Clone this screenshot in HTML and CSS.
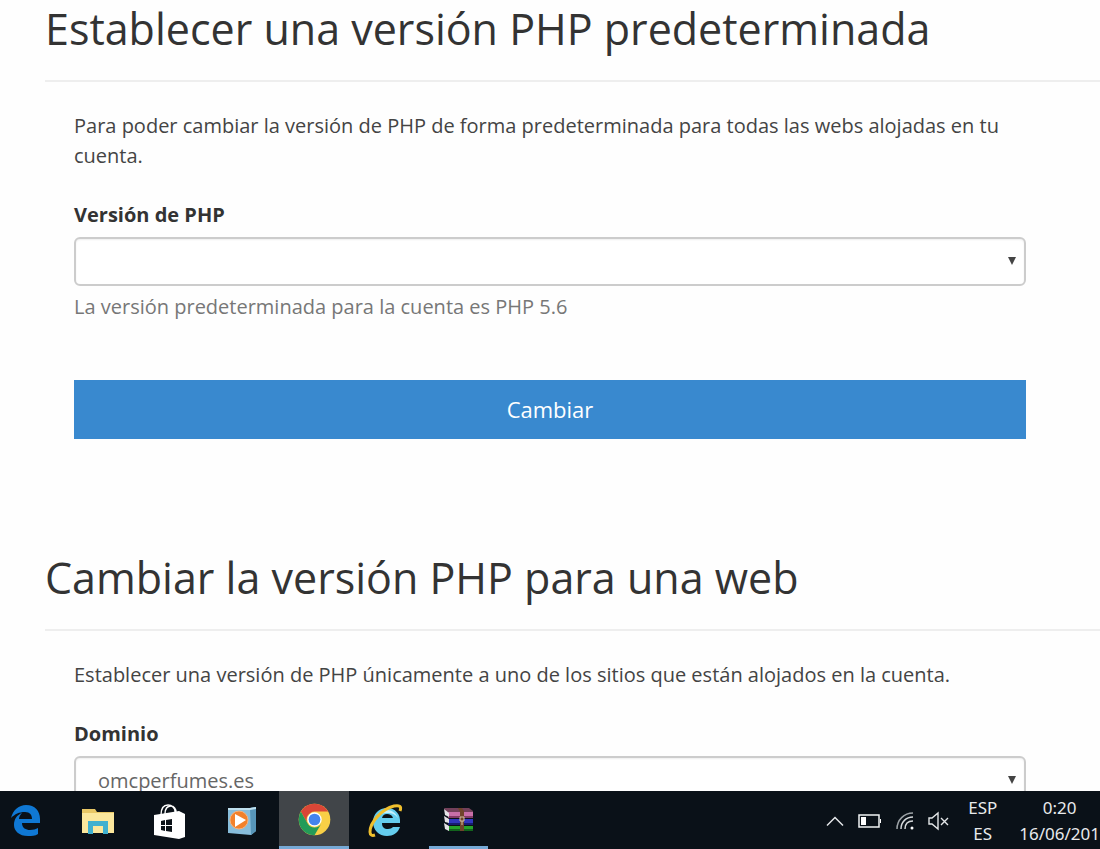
FILE: index.html
```html
<!DOCTYPE html>
<html lang="es">
<head>
  <meta charset="UTF-8">
  <meta name="viewport" content="width=device-width, initial-scale=1.0">
  <title>Versión de PHP</title>
  <link rel="stylesheet" href="styles.css">
</head>
<body>

<main class="page">
  <section class="panel">
    <h2>Establecer una versión PHP predeterminada</h2>
    <form class="panel-body">
      <p>Para poder cambiar la versión de PHP de forma predeterminada para todas las webs alojadas en tu cuenta.</p>
      <label for="version">Versión de PHP</label>
      <div class="select-box">
        <select id="version" name="version">
          <option selected></option>
        </select>
      </div>
      <span class="help">La versión predeterminada para la cuenta es PHP 5.6</span>
      <button type="button" class="btn">Cambiar</button>
    </form>
  </section>

  <section class="panel">
    <h2>Cambiar la versión PHP para una web</h2>
    <form class="panel-body">
      <p>Establecer una versión de PHP únicamente a uno de los sitios que están alojados en la cuenta.</p>
      <label for="domain">Dominio</label>
      <div class="select-box">
        <select id="domain" name="domain">
          <option selected>omcperfumes.es</option>
        </select>
      </div>
    </form>
  </section>
</main>

<footer class="taskbar">
  <nav class="apps">
    <button type="button" class="app edge" aria-label="Edge">
      <svg width="32" height="36" viewBox="0 0 32 36">
        <path fill="#0f78d4" d="M1 15C3 7 9 2 16 2c9 0 14 6 14 14v4H12c0 5 4 7 8 7 3 0 6-1 8-2v6c-3 2-6 2-10 2C9 33 4 28 4 22c0-6 3-10 8-12-2 2-3 4-3 6h13c0-4-2-7-7-7-6 0-10 2-14 6z"/>
      </svg>
    </button>
    <button type="button" class="app" aria-label="Explorador">
      <svg width="32" height="28" viewBox="0 0 32 28">
        <path fill="#e8c765" d="M0 2h13l2 3h17v7H0z"/>
        <path fill="#fbe79c" d="M0 6h32v20H0z"/>
        <path fill="#3fb0cf" d="M6 14h20v13h-5v-8H11v8H6z"/>
      </svg>
    </button>
    <button type="button" class="app" aria-label="Tienda">
      <svg width="34" height="36" viewBox="0 0 34 36">
        <path fill="none" stroke="#fff" stroke-width="1.4" d="M8 12C8 5 11 2 15 2s7 3 7 6v3M12 11C12 5 15 3 18 3s5 3 5 6"/>
        <path fill="#fff" d="M1 12l25-4 6 3v23l-6 2-25-4z"/>
        <path fill="#0b1218" d="M8 18l4-1v5H8zM13 17l6-1v6h-6zM8 23h4v5l-4-1zM13 23h6v6l-6-1z"/>
      </svg>
    </button>
    <button type="button" class="app" aria-label="Reproductor">
      <svg width="30" height="30" viewBox="0 0 30 30">
        <path fill="#87bddb" d="M1 2h22l6-1v24l-5 4L1 27z"/>
        <path fill="#5795b8" d="M23 2l6-1v24l-5 4z"/>
        <path fill="#bee0ef" d="M1 2h22l6-1v2l-6 1H1z"/>
        <circle cx="12" cy="14" r="9" fill="#f2812b" stroke="#f6b27c"/>
        <path fill="#fff" d="M8 8l11 6-11 7z"/>
      </svg>
    </button>
    <button type="button" class="app open active" aria-label="Chrome">
      <svg width="33" height="33" viewBox="0 0 48 48">
        <circle cx="24" cy="24" r="23" fill="#f8cf46"/>
        <path fill="#da4637" d="M4.100 12.500A23 23 0 0 1 43.900 12.500H24A11.500 11.500 0 0 0 14 18.300z"/>
        <path fill="#da4637" d="M4.100 12.500L14 29.700A11.500 11.500 0 0 1 24 12.500z"/>
        <path fill="#249b58" d="M4.100 12.500A23 23 0 0 0 24 47L34 29.700A11.500 11.500 0 0 1 14 29.700z"/>
        <circle cx="24" cy="24" r="10.500" fill="#fff"/>
        <circle cx="24" cy="24" r="8.500" fill="#4484ee"/>
      </svg>
    </button>
    <button type="button" class="app" aria-label="Internet Explorer">
      <svg width="36" height="36" viewBox="0 0 36 36">
        <path fill="#65cdee" fill-rule="evenodd" d="M19 5c8 0 14 6 13 15H14c0 4 2 6 6 6 2 0 4-1 5-2h7c-2 6-7 9-13 9C11 33 5 27 5 19S11 5 19 5zM14 15h11c-1-3-3-4-6-4s-4 1-5 4z"/>
        <path fill="#c4effb" d="M8 15c2-5 6-8 11-8 5 0 9 3 11 8-3-4-6-5-11-5S11 12 8 15z"/>
        <path fill="none" stroke="#efbf2d" stroke-width="3" d="M7 32c-3 1-5 0-5-3C2 19 14 6 26 3c5-1 8 0 6 5"/>
      </svg>
    </button>
    <button type="button" class="app open" aria-label="WinRAR">
      <svg width="31" height="26" viewBox="0 0 31 26">
        <path fill="#73405a" d="M1 1h25l4 3v3H4z"/>
        <path fill="#c96fa8" d="M5 5h25v5H5z"/>
        <path fill="#843a67" d="M5 9h25v2H5z"/>
        <path fill="#3037bd" d="M5 12h25v4H5z"/>
        <path fill="#171d70" d="M5 16h25v2H5z"/>
        <path fill="#27a329" d="M5 19h25v4H5z"/>
        <path fill="#12631c" d="M5 22h25v2H5z"/>
        <path fill="#e5e2e6" d="M1 2l5 4v4l-4-2zM1 9l5 3v4l-4-1zM1 16l5 3v5l-4-2z"/>
        <path fill="#70442a" d="M15 1h4l2 3v20h-4V5z"/>
        <path fill="none" stroke="#d3c3a5" stroke-width="1" d="M17 10h4v4h-4zM19 14v4"/>
      </svg>
    </button>
  </nav>

  <div class="tray">
    <svg width="20" height="12" viewBox="0 0 20 12"><path fill="none" stroke="#e4e7e9" stroke-width="1.500" d="M2 10.500l8-8 8 8"/></svg>
    <svg width="24" height="14" viewBox="0 0 24 14"><path fill="none" stroke="#f1f3f4" stroke-width="1.500" d="M1 1h20v12H1z"/><path fill="#fff" d="M3 3h5v8H3zM22 5h1v4h-1z"/></svg>
    <svg width="20" height="20" viewBox="0 0 20 20">
      <path fill="none" stroke="#9ca2a6" stroke-width="1.500" d="M2 18C2 9 9 2 18 2"/>
      <path fill="none" stroke="#d4d8da" stroke-width="1.500" d="M6 18C6 11 11 6 18 6M10 18c0-5 3-8 8-8"/>
      <circle cx="17" cy="17" r="1.500" fill="#fff"/>
    </svg>
    <svg width="22" height="20" viewBox="0 0 22 20"><path fill="none" stroke="#e4e7e9" stroke-width="1.400" d="M1 7h3l6-5v16l-6-5H1zM13 7l7 7M20 7l-7 7"/></svg>
    <div class="lang"><span>ESP</span><span>ES</span></div>
    <div class="clock"><span>0:20</span><span>16/06/201</span></div>
  </div>
</footer>

</body>
</html>
```
FILE: styles.css
```css
* { box-sizing: border-box; }
body { margin: 0; height: 100vh; display: flex; flex-direction: column; background: #fefefe; color: #333; font-family: "Open Sans", sans-serif; font-size: 20px; line-height: 30px; }

.page { flex: 1; min-height: 0; overflow: hidden; }
.panel { margin: 0 0 110px 45px; }
.panel h2 { margin: 0; padding-bottom: 22px; border-bottom: 2px solid #eee; font-size: 43px; line-height: 58px; font-weight: 400; }
.panel-body { display: flex; flex-direction: column; padding: 29px 74px 0 29px; }
.panel-body p { margin: 0 0 29px; color: #444; }
.panel-body label { font-weight: 700; margin-bottom: 7px; }

.select-box { position: relative; }
.select-box::after { content: ""; position: absolute; right: 10px; top: 20px; border: 4px solid transparent; border-top: 8px solid #444; border-bottom: 0; pointer-events: none; }
select { display: block; width: 100%; height: 49px; padding: 0 22px; border: 2px solid #ccc; border-radius: 6px; background: #fff; color: #666; font: inherit; appearance: none; box-shadow: inset 0 1px 2px #eee; }
.help { margin-top: 6px; color: #777; }
.btn { height: 59px; margin-top: 58px; padding: 0 0 2px; border: 0; background: #3989cf; color: #fff; font: inherit; font-size: 22px; }

.taskbar { flex: none; height: 58px; display: flex; justify-content: space-between; background: #0a1118; color: #e8eaec; overflow: hidden; }
.apps { display: flex; gap: 2px; }
.app { width: 70px; padding: 2px 0 0; border: 0; background: none; display: flex; align-items: center; justify-content: center; }
.edge { width: 61px; padding-right: 9px; }
.open { border-bottom: 3px solid #76a9d6; }
.active { background: #414549; }
.app:last-child { width: 59px; margin-left: 6px; }

.tray { display: flex; align-items: center; gap: 13px; padding-top: 1px; }
.lang, .clock { display: flex; flex-direction: column; align-items: center; font-family: "Noto Sans", sans-serif; font-size: 17px; line-height: 26px; }
.lang { margin-left: 5px; }
.clock { margin: 0 0 0 9px; }
```
